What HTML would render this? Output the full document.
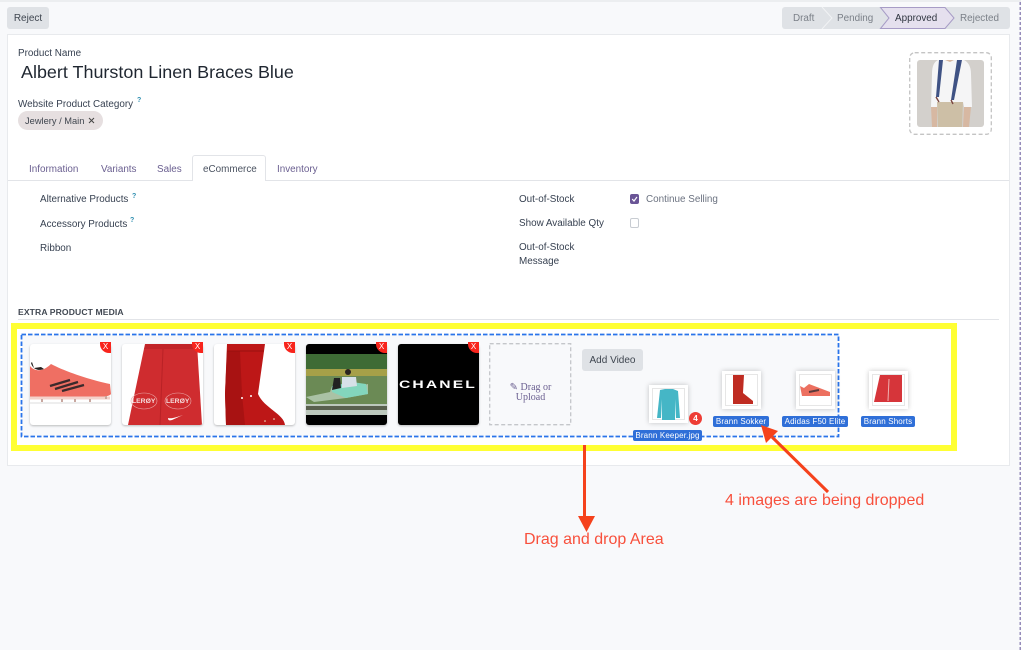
<!DOCTYPE html>
<html><head><meta charset="utf-8"><style>
html,body{margin:0;padding:0}
body{width:1024px;height:650px;position:relative;overflow:hidden;background:#f8f9fb;font-family:"Liberation Sans",sans-serif;color:#374151;font-size:9.9px}
div,span{position:absolute;white-space:nowrap;box-sizing:border-box}
.t{line-height:14px;margin-top:1px}
.card{top:344px;width:81px;height:81px;border-radius:3px;overflow:hidden;background:#fff;box-shadow:0 1px 2px rgba(0,0,0,.25)}
.card svg{display:block}
.x{top:342px;width:11px;height:11px;border-radius:0 0 0 9px;background:#f8241c;color:#fff;font-size:8px;line-height:10px;text-align:center}
.lab{background:#2f6fd8;color:#fff;font-size:8px;line-height:11px;height:11px;border-radius:2px;text-align:center;letter-spacing:.15px}
.th{width:39px;height:38px;background:#fff;box-shadow:0 0 5px rgba(0,0,0,.22)}
.th svg{display:block}
.tab{top:162px;margin-top:1px;color:#6a5f90;font-size:9.9px;line-height:14px}
.red{color:#f8503c;font-size:16px;line-height:20px}
.q{font-size:7px;line-height:9px;color:#2f8fb0;font-weight:bold}
</style></head><body>
<div style="left:0;top:0;width:1024px;height:2px;background:#eceef0"></div>
<div style="left:1021px;top:0;width:3px;height:650px;background:#fff"></div>
<svg style="position:absolute;left:1019px;top:0" width="3" height="650"><path d="M1.2 2V650" stroke="#7d70aa" stroke-width="1.2" stroke-dasharray="3 2"/></svg>

<div style="left:7px;top:7px;width:42px;height:22px;background:#dfe2e6;border-radius:3px;text-align:center;line-height:23px;font-size:10px;color:#3f4650">Reject</div>

<div style="left:782px;top:7px;width:228px;height:22px;background:#dfe2e6;border-radius:3px"></div>
<svg style="position:absolute;left:782px;top:7px" width="228" height="22">
<path d="M40 0l10 11-10 11" fill="none" stroke="#f2f3f5" stroke-width="1"/>
<path d="M98.5 .5H163L172 11L163 21.5H98.5L107 11Z" fill="#e5e0ee" stroke="#a79cc6"/>
</svg>
<div class="t" style="left:793px;top:10.5px;color:#7b8088">Draft</div>
<div class="t" style="left:837px;top:10.5px;color:#7b8088">Pending</div>
<div class="t" style="left:895px;top:10.5px;color:#2f3540">Approved</div>
<div class="t" style="left:960px;top:10.5px;color:#7b8088">Rejected</div>

<div style="left:7px;top:34px;width:1003px;height:432px;background:#fff;border:1px solid #e8eaed"></div>

<div class="t" style="left:18px;top:46px">Product Name</div>
<div style="left:21px;top:60px;font-size:17.95px;line-height:25px;color:#1f2630">Albert Thurston Linen Braces Blue</div>
<div class="t" style="left:18px;top:97px">Website Product Category</div>
<div class="q" style="left:137px;top:96px">?</div>
<div style="left:18px;top:111px;width:85px;height:19px;background:#e6dfe0;border-radius:10px;line-height:20px;padding-left:7px;font-size:9.3px;color:#40464f">Jewlery / Main</div>
<svg style="position:absolute;left:88px;top:117px" width="7" height="7"><path d="M1 1L6 6M6 1L1 6" stroke="#444" stroke-width="1"/></svg>

<svg style="position:absolute;left:908px;top:51px" width="85" height="85"><rect x="1.7" y="1.7" width="81.6" height="81.6" rx="5" fill="#fff" stroke="#c4c4c4" stroke-width="1.3" stroke-dasharray="4 2.5"/></svg>
<svg style="position:absolute;left:917px;top:60px;border-radius:3px" width="67" height="67" viewBox="0 0 67 67">
<rect width="67" height="67" fill="#d3d0cc"/>
<path d="M21 0H47C51 2 54 6 54 14L55 47H47L46 42H22L20 47H14L15 14C15 6 17 2 21 0Z" fill="#f5f5f6"/>
<path d="M20 42H46L45 67H21Z" fill="#cdbfa6"/>
<path d="M14 47H20L20 67H15ZM47 47H54L52 67H46Z" fill="#d7b8a2"/>
<path d="M22 0H26L22 37H19ZM40 0H45L37 40H34Z" fill="#3f5284"/>
<path d="M28 0H37L33 2Z" fill="#d7b8a2"/>
<path d="M19 37L22 42M34 40L36 44" stroke="#7a4640" stroke-width="1.4"/>
</svg>

<div style="left:8px;top:180px;width:1001px;height:1px;background:#e2e4e8"></div>
<div style="left:192px;top:155px;width:74px;height:26px;background:#fff;border:1px solid #e2e4e8;border-bottom:0;border-radius:3px 3px 0 0"></div>
<div class="tab" style="left:29px">Information</div>
<div class="tab" style="left:101px">Variants</div>
<div class="tab" style="left:157px">Sales</div>
<div class="tab" style="left:203px;color:#4a5260">eCommerce</div>
<div class="tab" style="left:277px">Inventory</div>

<div class="t" style="left:40px;top:192px">Alternative Products</div>
<div class="q" style="left:132px;top:192px">?</div>
<div class="t" style="left:40px;top:217px">Accessory Products</div>
<div class="q" style="left:130px;top:216px">?</div>
<div class="t" style="left:40px;top:241px">Ribbon</div>

<div class="t" style="left:519px;top:192px">Out-of-Stock</div>
<div class="t" style="left:519px;top:216px">Show Available Qty</div>
<div class="t" style="left:519px;top:240px">Out-of-Stock</div>
<div class="t" style="left:519px;top:254px">Message</div>
<div style="left:630px;top:194px;width:9px;height:10px;background:#6a5596;border-radius:2px"></div>
<svg style="position:absolute;left:630px;top:194px" width="9" height="10"><path d="M2.2 5L4 7L7 3" fill="none" stroke="#fff" stroke-width="1.2"/></svg>
<div class="t" style="left:646px;top:192px;color:#6b7280">Continue Selling</div>
<div style="left:630px;top:218px;width:9px;height:10px;background:#fff;border:1px solid #c8ccd2;border-radius:2px"></div>

<div style="left:18px;top:306px;font-size:8.6px;line-height:12px;font-weight:bold;color:#414852;letter-spacing:.1px">EXTRA PRODUCT MEDIA</div>
<div style="left:18px;top:319px;width:981px;height:1px;background:#e2e4e8"></div>

<div style="left:11px;top:323px;width:946px;height:128px;border:6.5px solid #ffff33;background:#fff"></div>
<svg style="position:absolute;left:20px;top:333px" width="820" height="105"><rect x="1.5" y="1.5" width="817" height="102" fill="#f8f9fb" stroke="#2a74ea" stroke-width="1.8" stroke-dasharray="4.5 2"/></svg>

<div class="card" style="left:30px">
<svg width="81" height="81"><rect y="58" width="81" height="2" fill="#eee"/>
<path d="M0 22C4 27 10 27 14 25C18 23 20 21 21 20C34 27 60 36 80 40L81 50C79 53 70 53 60 54H0Z" fill="#ef6f63"/>
<path d="M1 19C3 26 9 27 14 25L11 23L4 24L2 18Z" fill="#25201f"/>
<path d="M20 42L40 36M25 45L48 38M32 47L54 41" stroke="#3b2a2c" stroke-width="2.4"/>
<path d="M0 54H80" stroke="#f4d2cb" stroke-width="3"/>
<path d="M12 55v3M32 55v3M45 55v3M60 55v3M76 52v3" stroke="#c9a8a0" stroke-width="2"/></svg></div>
<div class="card" style="left:122px">
<svg width="81" height="81"><path d="M23 0H75L80 81H6L15 38Z" fill="#cf2c2f"/>
<path d="M24 0H74L75 5H22Z" fill="#c12428"/>
<path d="M41 5L38 81" stroke="#b92226"/>
<ellipse cx="22" cy="57" rx="13" ry="8" fill="none" stroke="#e9a8a8" stroke-width=".6"/>
<ellipse cx="56" cy="57" rx="13" ry="8" fill="none" stroke="#e9a8a8" stroke-width=".6"/>
<text x="10" y="59" font-size="6.8" font-weight="bold" fill="#f5dede" font-family="Liberation Sans">LERØY</text>
<text x="44" y="59" font-size="6.8" font-weight="bold" fill="#f5dede" font-family="Liberation Sans">LERØY</text>
<path d="M46 74C50 75 55 73 61 71L50 76C47 77 46 76 46 74Z" fill="#fff"/></svg></div>
<div class="card" style="left:214px">
<svg width="81" height="81"><path d="M13 0H51L44 50C50 64 70 70 71 81H12L11 50Z" fill="#bd1717"/>
<path d="M13 7H26L28 50L31 81H12L11 50Z" fill="#a81212"/>
<path d="M13 7H50" stroke="#99100f" stroke-width="1"/>
<circle cx="28" cy="54" r="1" fill="#fff"/><circle cx="37" cy="52" r="1" fill="#fff"/><circle cx="51" cy="77" r=".8" fill="#eec"/><circle cx="60" cy="75" r=".8" fill="#eec"/></svg></div>
<div class="card" style="left:306px;background:#000">
<svg width="81" height="81"><rect y="10" width="81" height="16" fill="#3e6b35"/><rect y="25" width="81" height="7" fill="#a6a048"/>
<rect y="32" width="81" height="29" fill="#6b8a55"/><rect y="60" width="81" height="11" fill="#bcc8bd"/>
<path d="M0 62H81V66H0Z" fill="#59604f"/>
<path d="M0 53L24 48L26 42H54L62 40V50L40 54L24 56L8 58Z" fill="#dff0e8" opacity=".55"/>
<path d="M26 48V42L46 38L60 40L62 50L40 54Z" fill="#83d6bd"/>
<path d="M36 33L50 33L51 42L36 44Z" fill="#d7e1e8"/>
<circle cx="42" cy="28" r="3" fill="#2a2320"/><path d="M28 34L26 46L35 44L34 34Z" fill="#222"/></svg></div>
<div class="card" style="left:398px;background:#000"><svg width="81" height="81"><text x="1" y="44" font-size="11" font-weight="bold" fill="#fff" font-family="Liberation Sans" textLength="78" lengthAdjust="spacingAndGlyphs" letter-spacing="1.5">CHANEL</text></svg></div>
<div class="x" style="left:100px">X</div><div class="x" style="left:192px">X</div><div class="x" style="left:284px">X</div><div class="x" style="left:376px">X</div><div class="x" style="left:468px">X</div>

<svg style="position:absolute;left:488px;top:342px" width="85" height="85"><rect x="1.7" y="1.7" width="81" height="81" fill="none" stroke="#c4c6ca" stroke-width="1.3" stroke-dasharray="4 2.5"/></svg>
<div style="left:489px;top:383px;width:83px;text-align:center;font-family:'Liberation Serif',serif;font-size:10px;line-height:10px;color:#6a5f90;white-space:normal">✎ Drag or<br>Upload</div>

<div style="left:582px;top:349px;width:61px;height:22px;background:#dfe2e6;border-radius:3px;text-align:center;line-height:23px;font-size:10px;color:#3f4650">Add Video</div>

<div class="th" style="left:649px;top:385px"><svg width="39" height="38"><rect x="3.5" y="3.5" width="32" height="31" fill="#fff" stroke="#e6e6e6"/><path d="M11 5L16 4H24L29 6L31 33H27L26 14V35H13V14L12 33H8Z" fill="#45b6c6"/></svg></div>
<div class="th" style="left:722px;top:371px"><svg width="39" height="38"><rect x="3.5" y="3.5" width="32" height="31" fill="#fff" stroke="#e6e6e6"/><path d="M11 4H22L21 22L31 30V33H11Z" fill="#bf2c22"/></svg></div>
<div class="th" style="left:796px;top:371px"><svg width="39" height="38"><rect x="3.5" y="3.5" width="32" height="31" fill="#fff" stroke="#e6e6e6"/><path d="M4 15L8 17L13 13L34 21V25L6 25Z" fill="#ec7060"/><path d="M13 21L23 19" stroke="#5c3a3a" stroke-width="2"/></svg></div>
<div class="th" style="left:869px;top:371px"><svg width="39" height="38"><rect x="3.5" y="3.5" width="32" height="31" fill="#fff" stroke="#e6e6e6"/><path d="M11 4H33V31H5Z" fill="#d6353a"/><path d="M20 8L19 30" stroke="#efb0b0"/></svg></div>
<div style="left:689px;top:412px;width:13px;height:13px;border-radius:50%;background:#ee3d35;color:#fff;font-size:8.5px;font-weight:bold;line-height:13px;text-align:center">4</div>

<div class="lab" style="left:633px;top:430px;width:69px">Brann Keeper.jpg</div>
<div class="lab" style="left:713px;top:416px;width:56px">Brann Sokker</div>
<div class="lab" style="left:782px;top:416px;width:66px">Adidas F50 Elite</div>
<div class="lab" style="left:861px;top:416px;width:54px">Brann Shorts</div>

<svg style="position:absolute;left:0;top:0" width="1024" height="650">
<path d="M584.5 445V520" stroke="#f5421c" stroke-width="3"/><path d="M578 516H595L586.5 532Z" fill="#f5421c"/>
<path d="M828 492L772 437" stroke="#f5421c" stroke-width="3"/><path d="M761 425L778 431L766 443Z" fill="#f5421c"/>
</svg>
<div class="red" style="left:725px;top:491px">4 images are being dropped</div>
<div class="red" style="left:524px;top:530px">Drag and drop Area</div>
</body></html>
